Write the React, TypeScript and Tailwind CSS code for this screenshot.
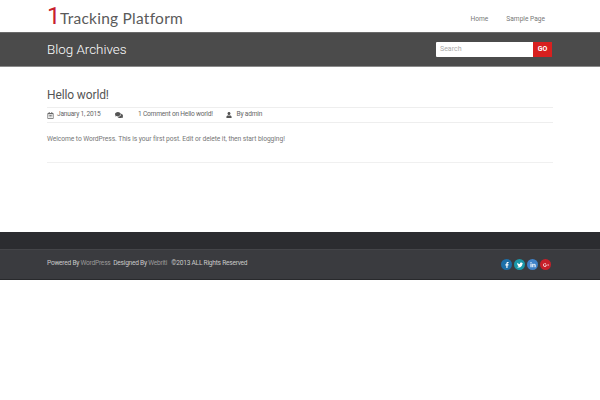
import { FaRegCalendarAlt, FaComments, FaUser, FaFacebookF, FaTwitter, FaLinkedinIn, FaGooglePlusG } from "react-icons/fa";

const social = [
  { Icon: FaFacebookF, bg: "bg-[#1d6fa8]" },
  { Icon: FaTwitter, bg: "bg-[#1a97a8]" },
  { Icon: FaLinkedinIn, bg: "bg-[#3f82c9]" },
  { Icon: FaGooglePlusG, bg: "bg-[#c7202a]" },
];

export default function App() {
  return (
    <div className="w-[600px] h-[400px] bg-white overflow-hidden font-['Roboto',sans-serif] text-[#555]">
      <header className="h-8 px-[47px] flex justify-between">
        <div className="flex items-baseline h-8">
          <span className="text-[#c8202c] text-[24px] leading-[33px] w-[13px]">1</span>
          <span className="text-[#5a5a5a] text-[15.5px] leading-[33px] tracking-[0.25px] font-['Lato',sans-serif]">Tracking Platform</span>
        </div>
        <nav className="flex items-center text-[6.6px] text-[#777] pr-2 gap-[18px] pt-[8px]">
          <span>Home</span>
          <span>Sample Page</span>
        </nav>
      </header>

      <section className="h-[35px] bg-[#4b4b4b] border-t border-[#6a6a6a] border-b border-b-[#8a8a8a] px-[47px] flex items-center justify-between">
        <h1 className="text-white text-[13.4px] leading-none font-light">Blog Archives</h1>
        <div className="flex h-[15px] w-[116px] mr-px">
          <div className="flex-1 bg-white text-[#aaa] text-[7px] leading-[15px] pl-1 rounded-l-[1px]">Search</div>
          <div className="w-[19px] bg-[#d8201f] text-white text-[7px] font-bold leading-[15px] text-center">GO</div>
        </div>
      </section>

      <main className="px-[47px] pt-[21px]">
        <h2 className="text-[12px] leading-[15px] tracking-[-0.12px] text-[#555]">Hello world!</h2>
        <div className="mt-1 h-4 border-y border-[#eeeeee] flex items-center text-[6.6px] tracking-[-0.2px] text-[#666]">
          <FaRegCalendarAlt className="w-[7px] h-[7px] text-[#666]" />
          <span className="ml-[3px] w-[58px]">January 1, 2015</span>
          <FaComments className="w-[8px] h-[8px] text-[#555]" />
          <span className="ml-[15px] w-[88px]">1 Comment on Hello world!</span>
          <FaUser className="w-[6px] h-[6px] text-[#555]" />
          <span className="ml-[4.5px]">By admin</span>
        </div>
        <p className="mt-[11px] text-[6.7px] tracking-[-0.07px] leading-[10px] text-[#777]">
          Welcome to WordPress. This is your first post. Edit or delete it, then start blogging!
        </p>
        <div className="mt-[18px] border-t border-[#f0f0f0]" />
      </main>

      <footer className="mt-[69px]">
        <div className="h-[18px] bg-[#2b2c30] border-b border-[#444549]" />
        <div className="h-[30px] bg-[#3a3b3f] border-b border-[#28292c] px-[47px] flex items-center justify-between">
          <p className="text-[6.6px] tracking-[-0.24px] text-[#c9c9c9] whitespace-pre -mt-[2px]">
            Powered By <span className="text-[#9a9a9a]">WordPress</span>  Designed By <span className="text-[#9a9a9a]">Webriti</span>   ©2013 ALL Rights Reserved
          </p>
          <div className="flex gap-[2px] pr-[2px]">
            {social.map(({ Icon, bg }, i) => (
              <span key={i} className={`w-[11px] h-[11px] rounded-full flex items-center justify-center text-white ${bg}`}>
                <Icon className="w-[6px] h-[6px]" />
              </span>
            ))}
          </div>
        </div>
      </footer>
    </div>
  );
}
